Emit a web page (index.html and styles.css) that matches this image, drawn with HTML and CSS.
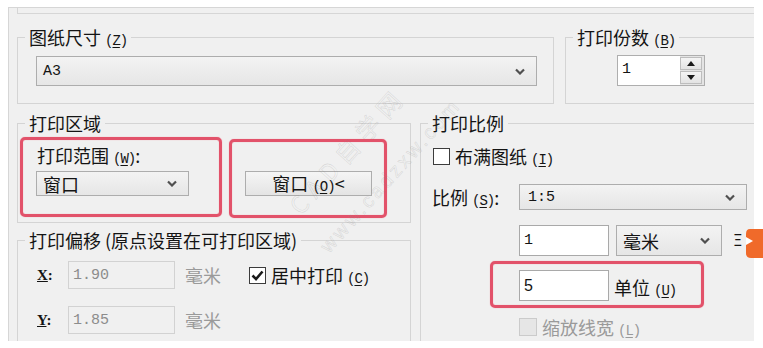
FILE: index.html
```html
<!DOCTYPE html>
<html lang="zh">
<head>
<meta charset="utf-8">
<title>打印设置</title>
<link rel="stylesheet" href="styles.css">
</head>
<body>
<div class="panel">
  <div class="prev-group"></div>

  <div class="row-top">
    <fieldset class="group group-size">
      <legend>图纸尺寸 <span class="key">(<u>Z</u>)</span></legend>
      <div class="select select-size">
        <span class="mono">A3</span>
        <svg class="chev" width="10" height="7" viewBox="0 0 10 7"><path d="M1 1.5 L5 5.5 L9 1.5" fill="none" stroke="#505050" stroke-width="2.2"/></svg>
      </div>
    </fieldset>

    <fieldset class="group group-copies">
      <legend>打印份数 <span class="key">(<u>B</u>)</span></legend>
      <div class="spinner">
        <div class="spin-field mono">1</div>
        <div class="spin-btns">
          <div class="spin-btn"><svg width="8" height="5" viewBox="0 0 8 5"><path d="M0 5 L4 0 L8 5Z" fill="#1a1a1a"/></svg></div>
          <div class="spin-btn"><svg width="8" height="5" viewBox="0 0 8 5"><path d="M0 0 L8 0 L4 5Z" fill="#1a1a1a"/></svg></div>
        </div>
      </div>
    </fieldset>
  </div>

  <div class="row-bottom">
    <div class="col-left">
      <fieldset class="group group-area">
        <legend>打印区域</legend>
        <div class="red-row">
          <div class="red-box red-range">
            <div class="field-label">打印范围 <span class="key">(<u>W</u>)</span>:</div>
            <div class="select select-range">
              <span>窗口</span>
              <svg class="chev" width="10" height="7" viewBox="0 0 10 7"><path d="M1 1.5 L5 5.5 L9 1.5" fill="none" stroke="#505050" stroke-width="2.2"/></svg>
            </div>
          </div>
          <div class="red-box red-window">
            <div class="button">窗口 <span class="key">(<u>O</u>)</span>&lt;</div>
          </div>
        </div>
      </fieldset>

      <fieldset class="group group-offset">
        <legend>打印偏移 (原点设置在可打印区域)</legend>
        <div class="offset-row">
          <span class="axis"><u>X</u>:</span>
          <div class="input disabled mono">1.90</div>
          <span class="unit">毫米</span>
          <span class="check checked"><svg width="15" height="15" viewBox="0 0 15 15"><path d="M2.5 7.5 L6 11 L12.5 3.5" fill="none" stroke="#1a1a1a" stroke-width="2.6"/></svg></span>
          <span class="check-text">居中打印 <span class="key">(<u>C</u>)</span></span>
        </div>
        <div class="offset-row row-y">
          <span class="axis"><u>Y</u>:</span>
          <div class="input disabled mono">1.85</div>
          <span class="unit">毫米</span>
        </div>
      </fieldset>
    </div>

    <fieldset class="group group-scale">
      <legend>打印比例</legend>
      <div class="fit-row">
        <span class="check"></span>
        <span class="check-text">布满图纸 <span class="key">(<u>I</u>)</span></span>
      </div>
      <div class="scale-row">
        <span class="scale-label">比例 <span class="key">(<u>S</u>)</span>:</span>
        <div class="select select-scale">
          <span class="mono">1:5</span>
          <svg class="chev" width="10" height="7" viewBox="0 0 10 7"><path d="M1 1.5 L5 5.5 L9 1.5" fill="none" stroke="#505050" stroke-width="2.2"/></svg>
        </div>
      </div>
      <div class="unit-row">
        <div class="input white mono">1</div>
        <div class="select select-unit">
          <span>毫米</span>
          <svg class="chev" width="10" height="7" viewBox="0 0 10 7"><path d="M1 1.5 L5 5.5 L9 1.5" fill="none" stroke="#505050" stroke-width="2.2"/></svg>
        </div>
        <span class="equals">Ξ</span>
      </div>
      <div class="red-box red-units">
        <div class="input white sans-num">5</div>
        <span class="units-text">单位 <span class="key">(<u>U</u>)</span></span>
      </div>
      <div class="lw-row">
        <span class="check disabled-check"></span>
        <span class="check-text grey">缩放线宽 <span class="key">(<u>L</u>)</span></span>
      </div>
    </fieldset>
  </div>

  <div class="watermark">
    <div class="wm-line1">CAD自学网</div>
    <div class="wm-line2">www.cadzxw.com</div>
  </div>
</div>

<svg class="badge" width="20" height="31" viewBox="0 0 20 31"><path d="M5 1 Q1 1 1 6 L1 25 Q1 30 6 30 L20 30 L20 1 Z" fill="#f06a2a"/><path d="M1 9 L8 13 L1 17 Z" fill="#fff"/></svg>
</body>
</html>
```

FILE: styles.css
```css
html, body {
  margin: 0;
  padding: 0;
}

body {
  width: 763px;
  height: 348px;
  overflow: hidden;
  background: #ffffff;
  font-family: "Noto Sans CJK SC", "Noto Sans", sans-serif;
  font-size: 18px;
  color: #141414;
  position: relative;
}

.panel {
  position: relative;
  box-sizing: border-box;
  margin: 7px 0 0 8px;
  width: 746px;
  height: 334px;
  background: #f0f0f0;
  border-top: 1px solid #d6d6d6;
  border-left: 1px solid #d6d6d6;
  overflow: hidden;
}

.prev-group {
  box-sizing: border-box;
  margin-left: 8px;
  width: 760px;
  height: 6px;
  border: 1px solid #d6d6d6;
  border-top: none;
}

.mono {
  font-family: "Liberation Mono", "DejaVu Sans Mono", monospace;
  font-size: 15px;
}

.sans-num {
  font-family: "Liberation Sans", Arial, sans-serif;
  font-size: 16px;
}

.key {
  font-family: "Liberation Mono", monospace;
  font-size: 14px;
  letter-spacing: -1px;
}

.key u {
  text-underline-offset: 2px;
}

/* group boxes */
.group {
  margin: 0;
  padding: 0;
  min-width: 0;
  box-sizing: border-box;
  border: 1px solid #d4d4d4;
  flex: none;
}

.group legend {
  margin-left: 7px;
  padding: 0 4px;
  height: 20px;
  line-height: 20px;
  font-size: 18px;
  white-space: nowrap;
}

.row-top {
  display: flex;
  gap: 11px;
  margin: 13px 0 0 8px;
}

.group-size {
  width: 537px;
  padding: 9px 0 17px 0;
}

.group-copies {
  width: 200px;
  padding-top: 8px;
}

/* selects */
.select {
  box-sizing: border-box;
  display: flex;
  align-items: center;
  justify-content: space-between;
  border: 1px solid #adadad;
  background: linear-gradient(#f3f3f3, #e6e6e6);
  padding: 0 11px 0 6px;
}

.select-size {
  width: 501px;
  height: 30px;
  margin-left: 18px;
}

.select-range {
  width: 153px;
  height: 25px;
  padding-left: 6px;
}

.select-scale {
  width: 228px;
  height: 26px;
  padding-left: 8px;
}

.select-unit {
  width: 106px;
  height: 31px;
  padding-left: 6px;
}

/* spinner */
.spinner {
  box-sizing: border-box;
  display: flex;
  width: 88px;
  height: 31px;
  margin-left: 51px;
  border: 1px solid #aeaeae;
  background: #fff;
}

.spin-field {
  flex: 1;
  padding-left: 4px;
  line-height: 28px;
}

.spin-btns {
  width: 24px;
  display: flex;
  flex-direction: column;
  gap: 1px;
  padding: 1px 2px 1px 0;
  box-sizing: border-box;
  background: #e4e4e4;
}

.spin-btn {
  flex: 1;
  display: flex;
  align-items: center;
  justify-content: center;
  border: 1px solid #bdbdbd;
  background: linear-gradient(#f4f4f4, #e3e3e3);
}

/* bottom rows */
.row-bottom {
  display: flex;
  gap: 9px;
  margin: 9px 0 0 8px;
}

.col-left {
  width: 394px;
  flex: none;
  display: flex;
  flex-direction: column;
  gap: 7px;
}

.group-area {
  padding: 4px 0 4px 0;
}

.red-row {
  display: flex;
  align-items: flex-start;
  gap: 7px;
  margin-left: 2px;
}

.red-box {
  box-sizing: border-box;
  border: 3px solid #e2526a;
  border-radius: 5px;
  box-shadow: 0 0 1px #f08a9a, inset 0 0 1px #f08a9a;
}

.red-range {
  width: 202px;
  height: 80px;
  padding: 5px 0 0 13px;
}

.field-label {
  padding-left: 1px;
  line-height: 20px;
  height: 20px;
  white-space: nowrap;
}

.select-range {
  margin-top: 6px;
}

.red-window {
  width: 158px;
  height: 79px;
  margin-top: 2px;
  padding: 29px 0 0 13px;
}

.button {
  box-sizing: border-box;
  width: 127px;
  height: 25px;
  border: 1px solid #adadad;
  background: linear-gradient(#f5f5f5, #e4e4e4);
  text-align: center;
  line-height: 23px;
  white-space: nowrap;
}

/* offset group */
.group-offset {
  height: 200px;
  padding-top: 11px;
}

.offset-row {
  display: flex;
  align-items: center;
  height: 28px;
  margin-left: 19px;
}

.row-y {
  margin-top: 17px;
}

.axis {
  width: 31px;
  font-family: "Liberation Serif", serif;
  font-weight: bold;
  font-size: 15px;
}

.input {
  box-sizing: border-box;
  display: flex;
  align-items: center;
  padding-left: 4px;
}

.input.disabled {
  width: 107px;
  height: 28px;
  border: 1px solid #d2d2d2;
  background: #f0f0f0;
  color: #8c8c8c;
}

.input.white {
  width: 90px;
  height: 31px;
  border: 1px solid #a9a9a9;
  background: #ffffff;
}

.unit {
  margin-left: 10px;
  color: #9a9a9a;
}

.check {
  box-sizing: border-box;
  width: 17px;
  height: 17px;
  border: 1px solid #3c3c3c;
  background: #fff;
  display: inline-flex;
  align-items: center;
  justify-content: center;
  flex: none;
}

.offset-row .check {
  margin-left: 28px;
}

.check-text {
  margin-left: 5px;
  white-space: nowrap;
}

/* scale group */
.group-scale {
  width: 360px;
  padding-top: 13px;
}

.fit-row {
  display: flex;
  align-items: center;
  height: 20px;
  margin-left: 12px;
}

.scale-row {
  display: flex;
  align-items: center;
  margin: 18px 0 0 11px;
}

.scale-label {
  width: 87px;
  white-space: nowrap;
}

.unit-row {
  display: flex;
  align-items: center;
  gap: 7px;
  margin: 15px 0 0 98px;
}

.equals {
  margin-left: 4px;
  font-family: "DejaVu Sans", sans-serif;
  font-size: 15px;
}

.red-units {
  display: flex;
  align-items: flex-start;
  width: 214px;
  height: 47px;
  margin: 5px 0 0 69px;
  padding: 3px 0 0 26px;
}

.red-units .input {
  margin-top: 3px;
}

.units-text {
  margin: 7px 0 0 5px;
  white-space: nowrap;
}

.lw-row {
  display: flex;
  align-items: center;
  margin: 9px 0 0 98px;
  height: 19px;
}

.disabled-check {
  width: 18px;
  height: 18px;
  border-color: #cbcbcb;
  background: #e6e6e6;
}

.grey {
  color: #9a9a9a;
}

/* watermark */
.watermark {
  position: absolute;
  left: 362px;
  top: 150px;
  transform: translate(-50%, -50%) rotate(-48deg);
  text-align: center;
  color: transparent;
  -webkit-text-stroke: 0.6px rgba(130, 130, 130, 0.22);
  pointer-events: none;
  white-space: nowrap;
}

.wm-line1 {
  font-size: 24px;
  letter-spacing: 7px;
  line-height: 30px;
  transform: translateX(-10px);
}

.wm-line2 {
  margin-top: 22px;
  font-family: "Liberation Sans", sans-serif;
  font-size: 20px;
  letter-spacing: 3px;
  line-height: 24px;
}

.badge {
  position: absolute;
  left: 745px;
  top: 228px;
}
```
